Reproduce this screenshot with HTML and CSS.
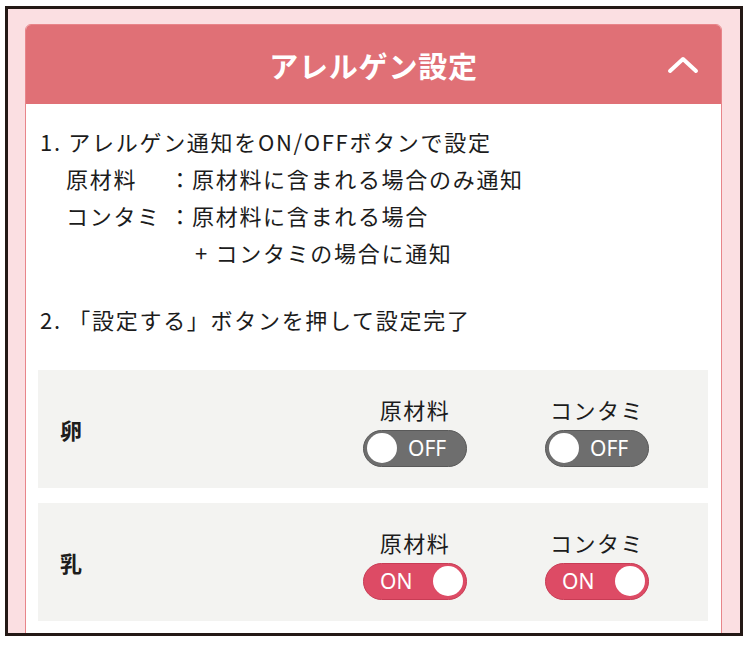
FILE: index.html
```html
<!DOCTYPE html>
<html lang="ja">
<head>
  <meta charset="UTF-8">
  <meta name="viewport" content="width=device-width, initial-scale=1.0">
  <title>アレルゲン設定</title>
  <link rel="stylesheet" href="styles.css">
</head>
<body>
  <div class="frame">
    <div class="card">
      <div class="card-header">
        <h1>アレルゲン設定</h1>
        <svg class="chevron" width="32" height="20" viewBox="0 0 32 20">
          <polyline points="3,16 16,4 29,16" fill="none" stroke="#fff" stroke-width="4" stroke-linecap="round" stroke-linejoin="round"/>
        </svg>
      </div>

      <div class="card-body">
        <div class="guide">
          <p>1. アレルゲン通知をON/OFFボタンで設定</p>
          <div class="terms">
            <span>原材料</span><span class="colon">：</span><span>原材料に含まれる場合のみ通知</span>
            <span>コンタミ</span><span class="colon">：</span><span>原材料に含まれる場合</span>
            <span></span><span></span><span class="plus">+ コンタミの場合に通知</span>
          </div>
          <p class="step2">2. 「設定する」ボタンを押して設定完了</p>
        </div>

        <div class="allergen">
          <div class="name">卵</div>
          <div class="switches">
            <div class="switch-col">
              <span>原材料</span>
              <button class="toggle off"><i class="knob"></i>OFF</button>
            </div>
            <div class="switch-col">
              <span>コンタミ</span>
              <button class="toggle off"><i class="knob"></i>OFF</button>
            </div>
          </div>
        </div>

        <div class="allergen">
          <div class="name">乳</div>
          <div class="switches">
            <div class="switch-col">
              <span>原材料</span>
              <button class="toggle on">ON<i class="knob"></i></button>
            </div>
            <div class="switch-col">
              <span>コンタミ</span>
              <button class="toggle on">ON<i class="knob"></i></button>
            </div>
          </div>
        </div>
      </div>
    </div>
  </div>
</body>
</html>
```

FILE: styles.css
```css
body {
  margin: 0;
  background: #fff;
  font-family: "Noto Sans CJK JP", "Noto Sans", sans-serif;
  color: #1c1c1c;
}
.frame {
  margin: 6px 0 0 5px;
  width: 738px;
  height: 630px;
  box-sizing: border-box;
  border: 3px solid #231815;
  background: #fbdfe2;
  padding: 15px 18px 0 17px;
  overflow: hidden;
}
.card {
  background: #fff;
  border: 1px solid #e8858a;
  border-radius: 6px 6px 0 0;
  overflow: hidden;
}
.card-header {
  position: relative;
  height: 79px;
  background: #e07076;
  display: flex;
  align-items: center;
  justify-content: center;
}
.card-header h1 {
  margin: 0;
  color: #fff;
  font-size: 29px;
  font-weight: bold;
  letter-spacing: 0.8px;
}
.chevron {
  position: absolute;
  right: 22px;
  top: 30px;
}
.card-body {
  padding: 19px 13px 20px 12px;
}
.guide {
  padding-left: 2px;
  font-size: 22px;
  line-height: 37px;
  letter-spacing: 1.7px;
}
.guide p {
  margin: 0;
}
.terms {
  display: grid;
  grid-template-columns: 102px 24px auto;
  padding-left: 26px;
}
.colon {
  text-align: center;
  letter-spacing: 0;
}
.plus {
  padding-left: 3px;
}
.guide .step2 {
  margin-top: 30px;
}
.allergen {
  margin-top: 32px;
  height: 118px;
  background: #f3f3f1;
  display: flex;
  align-items: center;
  justify-content: space-between;
  padding: 0 59px 0 22px;
}
.allergen + .allergen {
  margin-top: 15px;
}
.name {
  font-size: 22px;
  font-weight: bold;
}
.switches {
  display: flex;
  gap: 78px;
}
.switch-col {
  width: 104px;
  display: flex;
  flex-direction: column;
  align-items: center;
  gap: 7px;
  padding-top: 3px;
  font-size: 22px;
  line-height: 28px;
  letter-spacing: 1.5px;
}
.toggle {
  width: 104px;
  height: 37px;
  border-radius: 19px;
  border: 1px solid #595959;
  display: flex;
  align-items: center;
  gap: 11px;
  padding: 0 3px;
  font-family: "Noto Sans", sans-serif;
  font-size: 21px;
  letter-spacing: 0;
  color: #fff;
  box-sizing: border-box;
}
.toggle.off {
  background: #6e6e6e;
}
.toggle.on {
  background: #dd4b65;
  border-color: #c83c55;
  justify-content: space-between;
  padding: 0 3px 0 16px;
}
.knob {
  width: 30px;
  height: 30px;
  border-radius: 50%;
  background: #fff;
}
```
